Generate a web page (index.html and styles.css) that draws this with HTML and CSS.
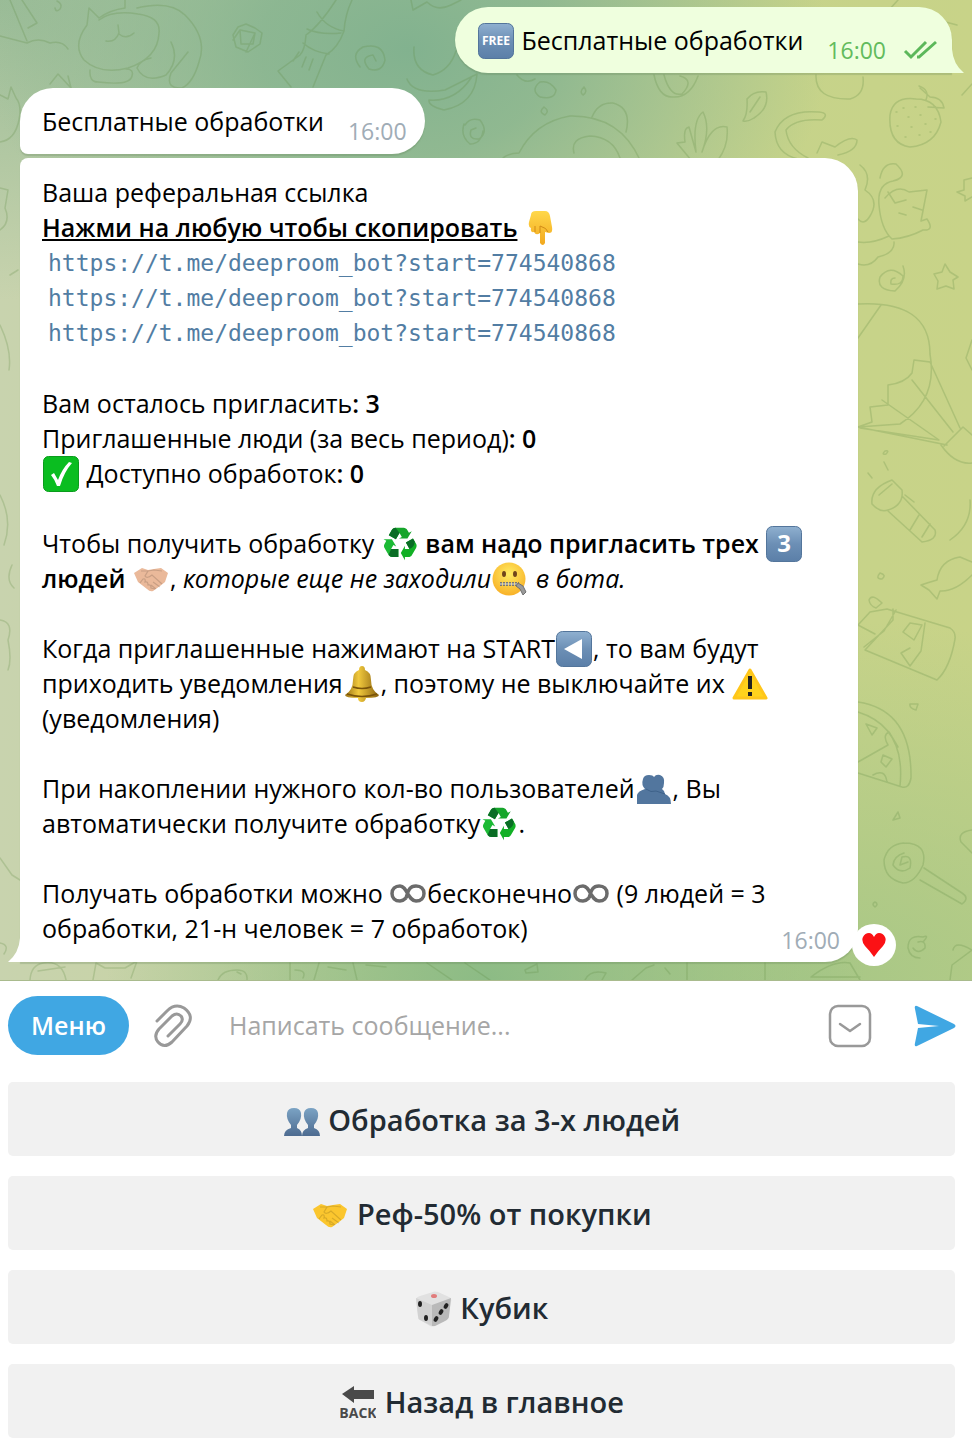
FILE: index.html
```html
<!DOCTYPE html>
<html lang="ru">
<head>
<meta charset="utf-8">
<meta name="viewport" content="width=device-width, initial-scale=1">
<title>Deeproom bot</title>
<link rel="stylesheet" href="styles.css">
</head>
<body>
<svg class="sprite" width="0" height="0" aria-hidden="true">
  <defs>
    <linearGradient id="key" x1="0" y1="0" x2="0" y2="1"><stop offset="0" stop-color="#8fb0d0"/><stop offset=".5" stop-color="#6c8fb5"/><stop offset="1" stop-color="#5b7fa8"/></linearGradient>
    <linearGradient id="people" x1="0" y1="0" x2="0" y2="1"><stop offset="0" stop-color="#7ba3c4"/><stop offset="1" stop-color="#4d6b90"/></linearGradient>
    <linearGradient id="gold" x1="0" y1="0" x2="0" y2="1"><stop offset="0" stop-color="#ffd84a"/><stop offset="1" stop-color="#f2a81e"/></linearGradient>
    <linearGradient id="bell" x1="0" y1="0" x2="1" y2="0"><stop offset="0" stop-color="#9a7216"/><stop offset=".4" stop-color="#f0c83c"/><stop offset="1" stop-color="#8a6210"/></linearGradient>
    <radialGradient id="face" cx=".5" cy=".35" r=".65"><stop offset="0" stop-color="#ffec62"/><stop offset="1" stop-color="#f8b128"/></radialGradient>
  </defs>
  <symbol id="recycle" viewBox="1 2 22 22"><path fill="#12b025" d="M21.82,15.42L19.32,19.75C18.83,20.61 17.92,21.06 17,21H15V23L12.5,18.5L15,14V16H17.82L15.6,12.15L19.93,9.65L21.73,12.77C22.25,13.54 22.32,14.57 21.82,15.42Z"/><path fill="#16a52b" d="M9.21,3.06H14.21C15.19,3.06 16.04,3.63 16.45,4.45L17.45,6.19L19.18,5.19L16.54,9.6L11.39,9.69L13.12,8.69L11.71,6.24L9.5,10.09L5.16,7.59L6.96,4.47C7.37,3.64 8.22,3.06 9.21,3.06Z"/><path fill="#1cba35" d="M5.05,19.76L2.55,15.43C2.06,14.58 2.13,13.56 2.64,12.79L3.64,11.06L1.91,10.06L7.05,10.14L9.7,14.56L7.97,13.56L6.56,16H11V21H7.4C6.47,21.07 5.55,20.61 5.05,19.76Z"/><path fill="#0a6d25" d="M5.16 7.59L9.5 10.09L11.7 6.24L9.3 3.1Q8 3 7 4.4ZM6.56 16H11V21H7.4Q6 21 5 19.7ZM17.82 16L15.6 12.15L19.93 9.65L21 11.5Q21 15 17.82 16Z"/></symbol>
  <symbol id="infinity" viewBox="0 0 36 36"><path d="M16 22Q13 25 10 25C5 25 2 22 2 17.500S5 10 10 10C17 10 18 25 26 25C31 25 34 22 34 17.500S31 10 26 10C18 10 18 17 16 22" fill="none" stroke="#6b6b6b" stroke-width="3.500"/></symbol>
  <symbol id="shake" viewBox="0 0 36 36"><path d="M1 12L9 7L15 9L21 8L28 7L35 12L32 21L27 25L20 30Q17 31 14 28L5 21Z"/><path d="M8 10L15 10L12 15Q14 18 19 14L29 23M15 10L21 9L29 10M7 22L10 18Q13 17 12 21Q15 20 15 24Q18 23 18 27L22 28M20 21L27 26M18 24L23 28" fill="none" stroke="#000" stroke-opacity=".14" stroke-width="1.200"/></symbol>
</svg>
<div class="app">
  <main class="chat">
    <svg class="wallpaper" viewBox="0 0 972 980" preserveAspectRatio="xMinYMin slice" aria-hidden="true">
      <path d="M10 0L27 41M22 0L37 23L28 28M0 36Q15 40 27 43Q38 37 50 43Q62 40 68 49M57 1Q63 4 60 9Q56 13 55 8M125 0V8Q110 10 99 18L89 8L87 25Q72 45 84 60Q100 75 128 68Q158 58 159 33Q161 17 138 14Q112 10 99 20M137 8Q170 0 185 15Q208 38 199 62Q193 83 182 88Q165 89 171 73L188 52M171 42Q180 60 166 75Q145 84 137 68Q140 60 151 58M118 25L119 33Q115 43 106 41M119 34Q126 40 134 33M90 70Q89 82 98 82Q130 86 132 76Q134 69 126 69M50 84L58 74L71 88L68 76M0 95L8 99L11 87L16 98Q22 105 19 120Q15 140 0 142"/>
      <path d="M246 24L255 28L262 33L260 44L248 52L236 47L233 35L238 27ZM240 30L255 33L253 44L241 44ZM240 30L233 40M255 33L246 52M336 0Q320 25 306 35Q305 50 300 55L278 71L291 87M352 0Q345 15 344 31Q338 48 326 55L313 87M317 12Q326 28 344 31M307 29Q320 35 341 33M303 43Q313 52 329 54M299 52L293 61M306 57L302 67M313 59L309 70M360 67Q350 54 363 47Q383 42 385 60Q382 73 369 69Q359 57 373 55L376 61M411 0L413 10L427 2Q437 12 451 5L461 0M414 47Q412 70 433 75Q450 70 456 51M407 79Q413 95 445 90L477 74Q475 104 444 110Q428 106 429 100Q455 102 471 78M465 125Q470 117 480 120Q489 132 479 139Q468 140 471 130L476 128M483 131Q481 144 470 144Q460 136 464 124"/>
      <path d="M517 75Q525 85 535 79M540 82Q550 80 556 90Q555 100 540 97Q530 90 540 82M584 87Q588 92 583 95Q579 92 584 87M544 107Q550 111 545 115Q538 112 544 107M502 159Q508 153 519 153Q535 122 570 116Q620 115 640 160M592 117Q598 102 613 103Q632 108 626 132M574 153Q570 138 590 136Q613 137 620 158M654 75Q659 98 673 97Q690 98 698 76M664 75Q670 97 682 94Q695 80 680 76M816 75Q815 100 850 99Q865 95 863 77M691 160L677 143L685 142Q683 128 689 127L696 152Q692 120 703 112Q711 128 702 152Q711 123 727 127Q729 145 718 160M743 121Q748 114 747 99Q754 90 766 92Q770 108 754 118Q748 122 743 121M760 97L750 112M822 120Q830 113 819 112Q784 109 775 132Q776 154 798 159M822 120Q795 118 786 130Q788 148 808 158M817 153L822 142L835 147Q850 135 857 140Q857 151 838 155M860 42L898 0M900 10L957 25M920 88L930 97Q942 97 944 108L928 107M919 86Q930 90 926 100M916 99Q893 96 890 115Q888 144 910 147Q935 145 941 122Q938 99 916 99M962 95L972 84"/>
      <path d="M896 112h1M903 108h1M915 107h1M908 117h1M920 115h1M897 126h1M911 127h1M925 124h1M935 119h1M905 137h1M919 135h1M930 132h1"/>
      <path d="M860 165Q872 174 865 190Q880 200 870 216Q864 226 858 219M880 178Q883 162 896 164Q910 177 893 181Q877 184 879 205Q881 229 892 239Q908 238 923 230Q935 231 927 219L921 221L927 190L909 192Q897 184 885 198M888 192L895 203L906 200M899 213L906 215M913 207L922 210M858 242Q872 244 889 236M858 264Q870 268 878 257Q895 253 894 242M903 266Q908 280 895 291Q876 290 880 277Q890 264 903 276Q903 286 891 284Q890 278 895 278M945 264L950 272L958 277L953 280L954 289L946 286L937 289L938 281L934 274L942 272ZM964 180L972 178M964 180V190L957 192L965 196V201L972 197M858 304Q930 300 930 354Q938 400 900 424L858 427M881 305L858 338M930 362L914 360L912 373Q905 383 888 385V405L870 407L872 422L858 427L947 445M860 428L939 440L882 400M912 380L953 432M930 362L960 428M944 446L963 427L972 435M941 445Q955 465 972 463M972 340L966 358L972 370"/>
      <path d="M885 451Q890 450 886 454Q881 455 885 451M868 473L872 478M884 462L888 470M892 480Q870 488 872 504Q880 513 888 510Q904 505 902 490ZM888 511L922 542Q938 540 935 530L902 496M905 495L914 502M879 495L892 484M910 530L919 515M922 537L930 524M970 500Q972 525 950 540M937 580Q940 560 960 557L972 562M937 580Q930 582 921 585L929 590L937 599L940 591Q955 592 972 575M880 573Q887 575 882 579Q875 579 880 573M869 600Q872 593 882 603L876 608Q870 606 869 600M858 625L870 612L887 609L950 628Q956 632 955 639Q950 668 937 680L865 650L893 620V609M864 647L884 631L896 610M858 625L875 634M903 632L910 623L922 625L914 640L903 632M925 623L921 651L910 666L901 653L910 648M910 704L918 704L916 710Q909 708 910 704M858 702Q912 710 911 778Q909 789 902 787L858 773M858 712Q906 727 900 786M858 762L888 745Q882 735 889 732L898 747M866 724L877 728L872 735ZM883 755L892 759L886 767L881 762ZM873 775Q885 768 887 782M898 812L900 818L893 820ZM972 830Q957 832 961 842L972 853M904 843Q928 843 923 865Q915 883 903 883Q884 879 884 860Q888 844 904 843M904 853Q894 856 893 865Q900 875 910 868Q913 854 902 857L900 865L908 862M920 880L962 904Q970 898 962 893L924 868M875 902Q879 904 875 907Q871 904 875 902M923 942Q930 934 923 937Q908 934 908 948Q910 958 920 958M913 948Q918 955 925 948Q926 940 918 942M950 980L952 965L972 950M953 950Q955 940 972 950"/>
      <path d="M0 188L8 190L5 208Q11 222 0 230M10 275L18 270M0 325Q12 350 9 370M0 495Q13 520 4 545M12 565Q5 580 14 588M0 620Q14 622 8 640Q12 660 8 670M0 858L12 875L20 880M0 943Q10 945 4 954M30 980Q31 965 43 963Q62 960 66 980M38 971L65 967M93 980L96 963L105 968L125 968L137 961L131 978M218 980Q222 970 237 970Q248 970 247 980M237 972L241 974M290 963V980M295 970Q307 970 303 978M314 980L319 963M353 963L357 980M328 967L346 970M366 965L386 967M427 963L452 980M465 963L490 980M525 970L537 964L538 972L526 973ZM585 980Q590 969 606 973L602 980M632 980L646 968L654 965M665 968L670 974M687 963V980M765 963V980M811 977Q833 960 850 963L860 980M811 977H860"/>
    </svg>

    <article class="bubble bubble-out">
      <p class="text"><svg class="emoji" viewBox="0 0 36 36" role="img" aria-label="free"><rect x=".5" y=".5" width="35" height="35" rx="6" fill="url(#key)" stroke="#53759b"/><text x="18" y="22" class="free-label">FREE</text></svg> Бесплатные обработки</p>
      <time class="time">16:00</time>
      <svg class="ticks" viewBox="0 0 36 22" role="img" aria-label="Прочитано"><path d="M2 12L8 18L23 3M14 18H16L33 3" fill="none" stroke="#5cb85a" stroke-width="3"/></svg>
      <svg class="tail tail-right" viewBox="0 0 12 24" aria-hidden="true"><path d="M0 0Q1 15 12 24H0Z"/></svg>
    </article>

    <article class="bubble bubble-in">
      <p class="text">Бесплатные обработки</p>
      <time class="time">16:00</time>
    </article>

    <article class="bubble bubble-long">
      <div class="text">
        <p>Ваша реферальная ссылка<br>
        <b><u>Нажми на любую чтобы скопировать</u></b> <svg class="emoji" viewBox="0 0 36 36" role="img" aria-label="вниз"><path d="M6 5Q6 1 11 1H20Q24 1 25 6L27 17Q28 23 24 23L20 22V33Q18 37 15 33V23Q11 26 9 22Q5 23 6 18Q3 17 4 12Z" fill="url(#gold)"/><path d="M10 22V16M15 23V16M15 16Q22 18 23 22" fill="none" stroke="#d18a16" stroke-width="1"/></svg></p>
        <ul class="links">
          <li><a href="https://t.me/deeproom_bot?start=774540868">https://t.me/deeproom_bot?start=774540868</a></li>
          <li><a href="https://t.me/deeproom_bot?start=774540868">https://t.me/deeproom_bot?start=774540868</a></li>
          <li><a href="https://t.me/deeproom_bot?start=774540868">https://t.me/deeproom_bot?start=774540868</a></li>
        </ul>
        <p class="para">Вам осталось пригласить<b>: 3</b><br>
        Приглашенные люди (за весь период)<b>: 0</b><br>
        <svg class="emoji" viewBox="0 0 36 36" role="img" aria-label="да"><rect x=".5" y=".5" width="35" height="35" rx="5" fill="#0abd20" stroke="#0a9c1c"/><path d="M8 19L11 17L15 24Q19 13 26 6L29 7Q21 16 17 30H14Q12 24 8 19Z" fill="#fff"/></svg> Доступно обработок<b>: 0</b></p>
        <p class="para">Чтобы получить обработку <svg class="emoji" role="img" aria-label="переработка"><use href="#recycle"/></svg> <b>вам надо пригласить трех <svg class="emoji" viewBox="0 0 36 36" role="img" aria-label="3"><rect x=".5" y=".5" width="35" height="35" rx="6" fill="url(#key)" stroke="#53759b"/><text x="18" y="26" class="key-label">3</text></svg> людей</b> <svg class="emoji" fill="#eab99a" role="img" aria-label="рукопожатие"><use href="#shake"/></svg>, <i>которые еще не заходили</i><svg class="emoji" viewBox="0 0 36 36" role="img" aria-label="рот на замке"><circle cx="17" cy="18" r="16.500" fill="url(#face)"/><ellipse cx="12" cy="13" rx="2" ry="3" fill="#70451b"/><ellipse cx="23" cy="13" rx="2" ry="3" fill="#70451b"/><path d="M8 23H27" stroke="#777" stroke-width="4" stroke-dasharray="2 1"/><path d="M8 23H27" stroke="#ddd" stroke-width="1"/><path d="M26 22L31 25L34 31L31 34L28 28L24 25Z" fill="#9a9a9a" stroke="#707070"/></svg> <i>в бота.</i></p>
        <p class="para">Когда приглашенные нажимают на START<svg class="emoji" viewBox="0 0 36 36" role="img" aria-label="назад"><rect x=".5" y=".5" width="35" height="35" rx="6" fill="url(#key)" stroke="#53759b"/><path d="M8 18L26 8V28Z" fill="#fff"/></svg>, то вам будут приходить уведомления<svg class="emoji" viewBox="0 0 36 36" role="img" aria-label="колокол"><path d="M18 0Q21 0 21 4Q27 6 27 14Q27 24 35 29Q35 32 22 32Q21 36 18 36Q14 36 14 32Q1 32 1 29Q9 24 9 14Q9 6 15 4Q15 0 18 0Z" fill="url(#bell)"/><path d="M3 28Q18 33 33 28M9 21Q18 24 27 21" fill="none" stroke="#795309" stroke-width="1.500"/></svg>, поэтому не выключайте их <svg class="emoji" viewBox="0 0 36 36" role="img" aria-label="внимание"><path d="M18 4L34 32H2Z" fill="#ffd21c" stroke="#ffc61a" stroke-width="3" stroke-linejoin="round"/><path d="M16 10H20V23H16ZM16 26H20V30H16Z" fill="#222"/></svg> (уведомления)</p>
        <p class="para">При накоплении нужного кол-во пользователей<svg class="emoji" viewBox="0 0 36 36" role="img" aria-label="люди"><path d="M1 33V24Q2 20 9 18Q5 14 7 8Q8 4 13 4Q17 4 18 6Q20 3 24 4Q29 6 28 12Q28 16 26 18Q29 20 29 23Q35 25 35 33Z" fill="#52769e"/><path d="M10 18Q15 22 20 20L29 23" fill="none" stroke="#3e628a"/></svg>, Вы автоматически получите обработку<svg class="emoji" role="img" aria-label="переработка"><use href="#recycle"/></svg>.</p>
        <p class="para">Получать обработки можно <svg class="emoji" role="img" aria-label="бесконечность"><use href="#infinity"/></svg>бесконечно<svg class="emoji" role="img" aria-label="бесконечность"><use href="#infinity"/></svg> (9 людей = 3 обработки, 21-н человек = 7 обработок)</p>
      </div>
      <time class="time">16:00</time>
      <svg class="tail tail-left" viewBox="0 0 12 24" aria-hidden="true"><path d="M12 0Q11 15 0 24H12Z"/></svg>
      <button class="reaction" type="button" aria-label="Реакция: сердце"><svg viewBox="0 0 24 24" aria-hidden="true"><path d="M12 24Q8 18 3 13Q-1 8 1 4Q3 0 7 0Q10 0 12 4Q14 0 17 0Q21 0 23 4Q25 8 21 13Q16 18 12 24Z" fill="#fb1115"/></svg></button>
    </article>
  </main>

  <form class="composer">
    <button class="menu" type="button">Меню</button>
    <button class="icon clip" type="button" aria-label="Прикрепить файл"><svg viewBox="0 0 38 44" fill="none" stroke="#999" stroke-width="3" stroke-linecap="round" stroke-linejoin="round"><path d="M3 17L13 7Q21 -1 30 4Q41 12 33 22L18 38Q10 45 4 38Q-1 32 5 25L18 12Q23 8 27 12Q30 16 26 20L14 32"/></svg></button>
    <input class="message" type="text" aria-label="Сообщение" placeholder="Написать сообщение...">
    <button class="icon keys" type="button" aria-label="Скрыть клавиатуру"><svg viewBox="0 0 44 44" fill="none" stroke="#999" stroke-width="2.500" stroke-linecap="round" stroke-linejoin="round"><rect x="2" y="2" width="40" height="40" rx="8"/><path d="M12 20L22 27L32 20"/></svg></button>
    <button class="icon send" type="submit" aria-label="Отправить"><svg viewBox="0 0 42 42"><path d="M3 1L40 19Q43 21 40 23L3 41Q0 42 1 38L4 23L25 21L4 19L1 4Q0 0 3 1Z" fill="#40a7e3"/></svg></button>
  </form>

  <section class="keyboard" aria-label="Клавиатура бота">
    <button class="key" type="button"><svg class="emoji" viewBox="0 0 36 36" aria-hidden="true"><path d="M0 33Q0 27 7 25V22Q2 16 3 10Q4 5 10 5Q16 5 17 10Q18 16 13 22V25Q18 27 18 33Z" fill="url(#people)"/><path d="M18 33Q18 27 24 25V22Q19 16 20 10Q21 5 27 5Q33 5 34 10Q35 16 30 22V25Q36 27 36 33Z" fill="url(#people)"/></svg> Обработка за 3-х людей</button>
    <button class="key" type="button"><svg class="emoji" fill="#fbc62e" aria-hidden="true"><use href="#shake"/></svg> Реф-50% от покупки</button>
    <button class="key" type="button"><svg class="emoji" viewBox="0 0 36 36" aria-hidden="true"><path d="M17 1Q18 0 22 1L33 6Q36 7 35 11L33 24Q33 28 29 30L19 35Q17 36 14 35L4 29Q2 28 2 25L0 9Q0 6 4 5Z" fill="#e1e1e1"/><path d="M16 14L35 7L33 25Q33 28 29 30L19 35H16Z" fill="#b9b9b9"/><path d="M0 7L16 14V35L4 29Q2 28 2 25Z" fill="#d2d2d2"/><ellipse cx="18" cy="5" rx="3" ry="2" fill="#e17c7c"/><g fill="#222"><ellipse cx="4" cy="13" rx="2" ry="3"/><ellipse cx="10" cy="27" rx="2" ry="3"/><ellipse cx="30" cy="15" rx="2" ry="3" transform="rotate(30 30 15)"/><ellipse cx="25" cy="21" rx="2" ry="3" transform="rotate(30 25 21)"/><ellipse cx="20" cy="28" rx="2" ry="3" transform="rotate(30 20 28)"/></g></svg> Кубик</button>
    <button class="key" type="button"><svg class="emoji" viewBox="0 0 36 36" role="img" aria-label="back"><path d="M2 9L14 1V5H34V14H14V18Z" fill="#4a4a4a"/><text x="18" y="33" class="back-label">BACK</text></svg> Назад в главное</button>
  </section>
</div>
</body>
</html>
```
FILE: styles.css
```css
* {
  box-sizing: border-box;
}

body {
  margin: 0;
  background: #fff;
  color: #000;
  font: 25px/35px "Open Sans", "Noto Sans", sans-serif;
}

p,
ul {
  margin: 0;
  padding: 0;
}

button,
input {
  border: 0;
  padding: 0;
  background: none;
  font: inherit;
}

b {
  font-weight: 600;
}

.sprite {
  position: absolute;
}

.app {
  display: flex;
  flex-direction: column;
  min-height: 100vh;
}

/* Chat */
.chat {
  position: relative;
  display: flex;
  flex: 1;
  flex-direction: column;
  align-items: flex-start;
  gap: 4px;
  padding: 7px 20px 18px;
  overflow: hidden;
  border-bottom: 1px solid #a9bb8d;
  background:
    radial-gradient(ellipse 420px 300px at 42% 5%, #82b28f 0%, #82b28fcc 35%, #82b28f00 100%),
    radial-gradient(ellipse 440px 300px at 0% 0%, #9abc97 0%, #9abc9700 100%),
    radial-gradient(ellipse 380px 260px at 50% 100%, #8cbb85 0%, #8cbb8500 100%),
    radial-gradient(ellipse 600px 360px at 85% 100%, #a8c786 0%, #a8c78600 100%),
    linear-gradient(90deg, #c8d3ae 0%, #c6d38a 80%, #c8d388 100%);
}

.wallpaper {
  position: absolute;
  inset: 0;
  width: 100%;
  height: 100%;
  fill: none;
  stroke: #5f8a45;
  stroke-opacity: .25;
  stroke-width: 1.5;
  stroke-linecap: round;
  stroke-linejoin: round;
}

.bubble {
  position: relative;
  display: flex;
  padding: 16px 18px 15px 22px;
  background: #fff;
  box-shadow: 0 2px 1px #5a7a5040;
}

.bubble-out {
  align-self: flex-end;
  margin-bottom: 11px;
  border-radius: 33px 33px 0 33px;
  padding-right: 13px;
  background: #efffde;
}

.bubble-in {
  border-radius: 33px 33px 33px 8px;
}

.bubble-long {
  flex-direction: column;
  max-width: 838px;
  border-radius: 8px 33px 33px 0;
  padding-top: 17px;
  padding-bottom: 10px;
}

.time {
  align-self: flex-end;
  margin-left: 24px;
  color: #a0acb6;
  font-size: 23px;
  line-height: 24px;
}

.bubble-out .time {
  color: #62bb5c;
}

.bubble-in .time,
.bubble-out .time {
  margin-bottom: -4px;
}

.bubble-long .time {
  margin-top: -18px;
}

.ticks {
  align-self: flex-end;
  width: 36px;
  height: 22px;
  margin-left: 17px;
  margin-bottom: -3px;
}

.tail {
  position: absolute;
  bottom: 0;
  width: 12px;
  height: 24px;
}

.tail-right {
  left: 100%;
  fill: #efffde;
}

.tail-left {
  right: 100%;
  fill: #fff;
}

.emoji {
  width: 36px;
  height: 36px;
  margin: -10px 1px -6px;
  vertical-align: middle;
}

.free-label,
.key-label {
  fill: #fff;
  font-weight: 700;
  text-anchor: middle;
}

.free-label {
  font-size: 12px;
}

.key-label {
  font-size: 24px;
}

.links {
  padding: 1px 0 0 6px;
  list-style: none;
  font-family: "DejaVu Sans Mono", monospace;
  font-size: 23px;
}

.links a {
  color: #527da3;
  text-decoration: none;
}

.para {
  margin-top: 35px;
}

.reaction {
  position: absolute;
  right: -38px;
  bottom: -4px;
  display: grid;
  place-items: center;
  width: 44px;
  height: 42px;
  border-radius: 50%;
  background: #fff;
}

.reaction svg {
  width: 24px;
  height: 24px;
}

/* Message field */
.composer {
  display: flex;
  align-items: center;
  padding: 15px 16px 27px 8px;
}

.menu {
  width: 121px;
  height: 59px;
  border-radius: 30px;
  background: #40a7e3;
  color: #fff;
  font-weight: 600;
}

.icon {
  display: flex;
}

.clip {
  margin: 0 37px 0 25px;
}

.clip svg {
  width: 38px;
  height: 44px;
}

.message {
  flex: 1;
  min-width: 0;
  color: #000;
}

.message::placeholder {
  color: #a6a6a6;
  opacity: 1;
}

.keys svg {
  width: 44px;
  height: 44px;
}

.send {
  margin-left: 42px;
}

.send svg {
  width: 42px;
  height: 42px;
}

/* Bot keyboard */
.keyboard {
  display: grid;
  gap: 20px;
  padding: 0 17px 13px 8px;
}

.key {
  height: 74px;
  border-radius: 5px;
  background: #f1f1f1;
  color: #222b33;
  font-size: 29px;
  font-weight: 600;
}

.back-label {
  fill: #4a4a4a;
  font-size: 14px;
  font-weight: 700;
  text-anchor: middle;
}
```
